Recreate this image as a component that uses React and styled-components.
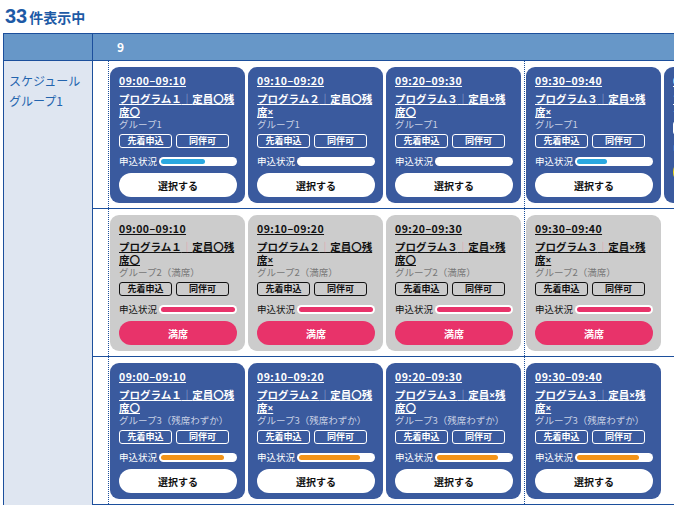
import styled, { createGlobalStyle } from 'styled-components'

const GlobalStyle = createGlobalStyle`
  html, body {
    margin: 0;
    padding: 0;
    overflow: hidden;
    background: #fff;
  }
  body {
    font-family: "Noto Sans CJK JP", "Noto Sans", sans-serif;
  }
`

const LINE = '#1c4f9c'

const tones = {
    blue: { bg: '#3a5a9e', text: '#fff', sub: '#c9d1e4', tag: '#fff', sep: 'rgba(255,255,255,0.55)' },
    gray: { bg: '#cccccc', text: '#111', sub: '#777', tag: '#111', sep: '#e59aa8' },
}

const buttons = {
    select: { bg: '#fff', color: '#111', label: '選択する' },
    full: { bg: '#e8336a', color: '#fff', label: '満席' },
    wait: { bg: '#f3dc12', color: '#111', label: 'キャンセル待ち' },
}

const slots = [
    { time: '09:00–09:10', name: 'プログラム１', cap: '定員〇残席〇' },
    { time: '09:10–09:20', name: 'プログラム２', cap: '定員〇残席×' },
    { time: '09:20–09:30', name: 'プログラム３', cap: '定員×残席〇' },
    { time: '09:30–09:40', name: 'プログラム３', cap: '定員×残席×' },
]

const rows = [
    { tone: 'blue', group: 'グループ1', bar: '#2aa8e0', fills: [60, 0, 0, 41], button: 'select', extra: true },
    { tone: 'gray', group: 'グループ2（満席）', bar: '#e8336a', fills: [100, 100, 100, 100], button: 'full' },
    { tone: 'blue', group: 'グループ3（残席わずか）', bar: '#f39419', fills: [85, 83, 82, 84], button: 'select' },
]

// the × mark is narrower than a full-width glyph in the original
function Capacity({ text }) {
    return text.split(/(×)/).map((part, i) =>
        part === '×' ? <Cross key={i}>×</Cross> : part
    )
}

function SlotCard({ tone, time, name, cap, group, bar, fill, button }) {
    const t = tones[tone]
    const b = buttons[button]
    return (
        <Card $bg={t.bg} $color={t.text}>
            <Time>{time}</Time>
            <Title>
                {name}<Sep $color={t.sep}>｜</Sep><Capacity text={cap} />
            </Title>
            <Group $color={t.sub}>{group}</Group>
            <Tags>
                <Tag $color={t.tag}>先着申込</Tag>
                <Tag $color={t.tag}>同伴可</Tag>
            </Tags>
            <Status>
                <StatusLabel>申込状況</StatusLabel>
                <Bar>
                    <Fill $color={bar} style={{ width: `${fill}%` }} />
                </Bar>
            </Status>
            <Action $bg={b.bg} $color={b.color}>{b.label}</Action>
        </Card>
    )
}

export default function App() {
    return (
        <Page>
            <GlobalStyle />
            <Count><Num>33</Num>件表示中</Count>
            <Table>
                <HeadRow>
                    <HeadSide />
                    <HeadHour>9</HeadHour>
                </HeadRow>
                <Body>
                    <Side>スケジュール<br />グループ1</Side>
                    <Rows>
                        {rows.map((r, ri) => (
                            <SlotRow key={ri}>
                                <Block>
                                    {slots.slice(0, 3).map((s, i) => (
                                        <SlotCard key={i} {...s} tone={r.tone} group={r.group} bar={r.bar} fill={r.fills[i]} button={r.button} />
                                    ))}
                                </Block>
                                <Block>
                                    <SlotCard {...slots[3]} tone={r.tone} group={r.group} bar={r.bar} fill={r.fills[3]} button={r.button} />
                                    {r.extra && (
                                        <SlotCard time="09:40–09:50" name="プログラム４" cap="定員〇" tone="blue" group="グループ1" bar="#2aa8e0" fill={20} button="wait" />
                                    )}
                                </Block>
                            </SlotRow>
                        ))}
                    </Rows>
                </Body>
            </Table>
        </Page>
    )
}

const Page = styled.div`
    width: 674px;
    height: 508px;
    overflow: hidden;
`

const Count = styled.div`
    box-sizing: border-box;
    height: 33px;
    padding: 4px 0 0 5px;
    line-height: 24px;
    color: #1d5aa6;
    font-size: 14px;
    font-weight: bold;
    white-space: nowrap;
`

const Num = styled.span`
    font-family: "Liberation Sans", Arial, sans-serif;
    font-size: 20px;
    margin-right: 2px;
`

const Table = styled.div`
    display: flex;
    flex-direction: column;
    width: max-content;
    margin-left: 3px;
    border-left: 1px solid ${LINE};
    border-top: 1px solid ${LINE};
`

const HeadRow = styled.div`
    display: flex;
    height: 26px;
    background: #6797c8;
    border-bottom: 1px solid ${LINE};
`

const HeadSide = styled.div`
    width: 88px;
    flex-shrink: 0;
    border-right: 1px solid ${LINE};
`

const HeadHour = styled.div`
    flex: 1;
    padding-left: 24px;
    line-height: 26px;
    color: #fff;
    font-size: 12px;
    font-weight: bold;
`

const Body = styled.div`
    display: flex;
`

const Side = styled.div`
    box-sizing: border-box;
    width: 89px;
    flex-shrink: 0;
    padding: 10px 0 0 5px;
    background: #dfe6f1;
    border-right: 1px solid ${LINE};
    color: #2364ae;
    font-size: 12px;
    line-height: 20px;
`

const Rows = styled.div`
    display: flex;
    flex-direction: column;
`

const SlotRow = styled.div`
    display: flex;
    padding-left: 15px;
    border-bottom: 1px solid ${LINE};
`

const Block = styled.div`
    display: flex;
    padding: 6px 0 5px 1px;
    border-left: 1px dotted ${LINE};
`

const Card = styled.div`
    box-sizing: border-box;
    width: 135px;
    height: 136px;
    flex-shrink: 0;
    margin-right: 3px;
    padding: 7px 8px 6px 9px;
    border-radius: 9px;
    background: ${p => p.$bg};
    color: ${p => p.$color};
    display: flex;
    flex-direction: column;
    overflow: hidden;
`

const Time = styled.div`
    font-size: 10.5px;
    font-weight: bold;
    line-height: 14px;
    letter-spacing: 0.45px;
    text-decoration: underline;
    white-space: nowrap;
`

const Title = styled.div`
    margin-top: 4px;
    font-size: 10.5px;
    font-weight: bold;
    line-height: 13px;
    text-decoration: underline;
`

const Sep = styled.span`
    color: ${p => p.$color};
    font-weight: normal;
`

const Cross = styled.span`
    font-family: "Noto Sans", "DejaVu Sans", sans-serif;
    font-size: 10px;
    line-height: 1;
`

const Group = styled.div`
    font-size: 9.5px;
    line-height: 13px;
    color: ${p => p.$color};
    white-space: nowrap;
`

const Tags = styled.div`
    display: flex;
    gap: 4px;
    margin-top: 3px;
`

const Tag = styled.div`
    box-sizing: border-box;
    width: 53px;
    height: 14px;
    border: 1px solid ${p => p.$color};
    border-radius: 3px;
    font-size: 9px;
    font-weight: bold;
    line-height: 12px;
    text-align: center;
`

const Status = styled.div`
    display: flex;
    align-items: center;
    height: 12px;
    margin-top: 7px;
`

const StatusLabel = styled.span`
    font-size: 9.5px;
    white-space: nowrap;
`

const Bar = styled.div`
    box-sizing: border-box;
    flex: 1;
    height: 9px;
    margin-left: 2px;
    padding: 2px;
    border-radius: 5px;
    background: #fff;
`

const Fill = styled.div`
    height: 5px;
    border-radius: 3px;
    background: ${p => p.$color};
`

const Action = styled.div`
    flex-shrink: 0;
    height: 24px;
    margin-top: 6px;
    border-radius: 12px;
    background: ${p => p.$bg};
    color: ${p => p.$color};
    display: flex;
    align-items: center;
    justify-content: center;
    font-size: 10px;
    font-weight: bold;
`
